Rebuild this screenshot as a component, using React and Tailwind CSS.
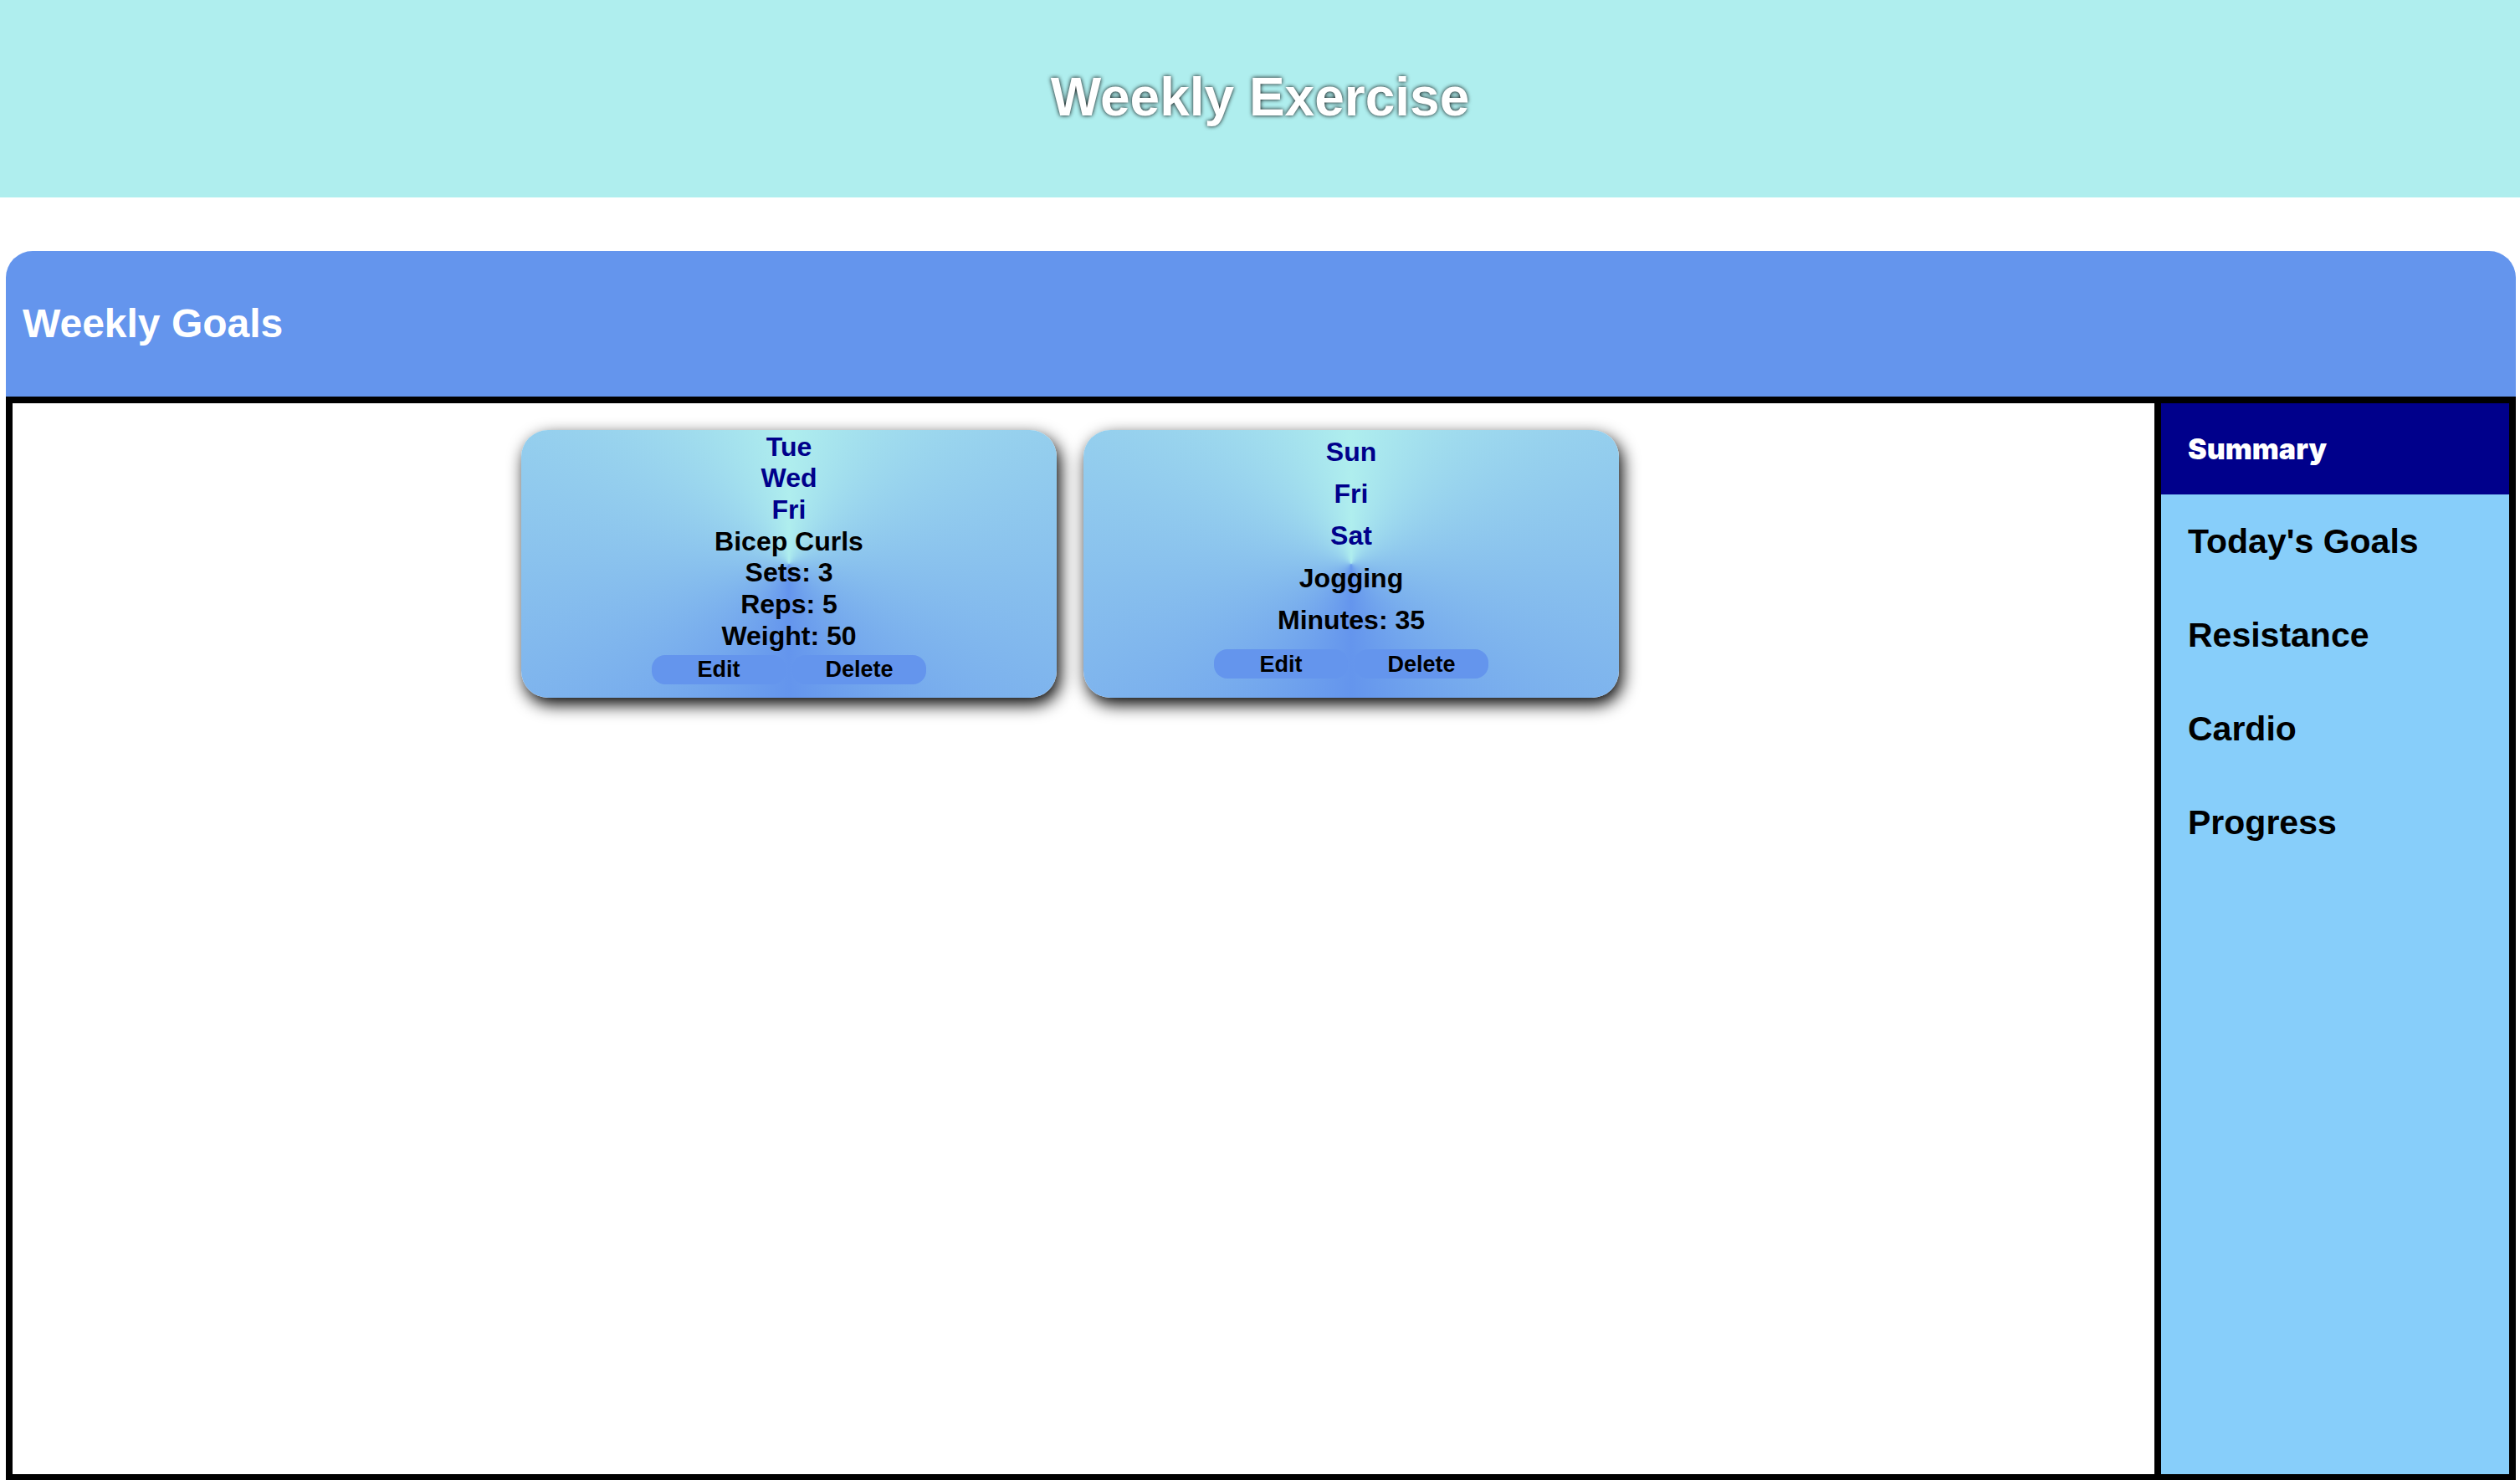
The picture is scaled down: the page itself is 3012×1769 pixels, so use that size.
const NAV_LINKS = ["Today's Goals", "Resistance", "Cardio", "Progress"];

const EXERCISES = [
  {
    days: ["Tue", "Wed", "Fri"],
    details: ["Bicep Curls", "Sets: 3", "Reps: 5", "Weight: 50"],
  },
  {
    days: ["Sun", "Fri", "Sat"],
    details: ["Jogging", "Minutes: 35"],
  },
];

function CardButton({ children }) {
  return (
    <button
      type="button"
      className="h-[35px] w-40 rounded-2xl bg-[#6495ed] text-[27px] leading-[30px] font-bold text-black"
    >
      {children}
    </button>
  );
}

function ExerciseCard({ days, details }) {
  return (
    <article className="mr-8 flex h-80 w-1/4 flex-col rounded-[32px] bg-[conic-gradient(#afeeee,#6495ed,#afeeee)] pt-px pb-[15px] text-center text-[32px] leading-[36px] font-bold shadow-[4px_8px_20px_black]">
      {days.map((day) => (
        <p key={day} className="flex flex-1 items-center justify-center text-[#00008b]">
          {day}
        </p>
      ))}
      {details.map((detail) => (
        <p key={detail} className="flex flex-1 items-center justify-center">
          {detail}
        </p>
      ))}
      <div className="flex flex-1 items-center justify-center gap-2 pt-[3px]">
        <CardButton>Edit</CardButton>
        <CardButton>Delete</CardButton>
      </div>
    </article>
  );
}

export default function App() {
  return (
    <div className="flex min-h-screen flex-col bg-white font-['Liberation_Sans',Arial,sans-serif] text-black">
      <header className="bg-[#afeeee] pt-20 pb-[84px] text-center">
        <h1 className="text-[64px] leading-[72px] font-bold text-white [text-shadow:0_0_5px_black]">
          Weekly Exercise
        </h1>
      </header>
      <div className="mt-16 mr-[5px] ml-[7px] flex flex-1 flex-col">
        <div className="rounded-t-[32px] bg-[#6495ed] px-5 py-[60px]">
          <h2 className="text-[48px] leading-[54px] font-bold text-white">Weekly Goals</h2>
        </div>
        <div className="flex flex-1 border-8 border-b-[7px] border-black">
          <main className="flex flex-1 items-start justify-center pt-8">
            {EXERCISES.map((exercise) => (
              <ExerciseCard key={exercise.details[0]} {...exercise} />
            ))}
          </main>
          <nav className="flex w-[424px] flex-col border-l-8 border-black bg-[#87cefa]">
            <a
              href="#summary"
              aria-current="page"
              className="bg-[#00008b] p-8 font-[Inter,sans-serif] text-[34px] leading-[45px] font-black text-white"
            >
              Summary
            </a>
            {NAV_LINKS.map((label) => (
              <a key={label} href="#" className="p-8 text-[41px] leading-[48px] font-bold">
                {label}
              </a>
            ))}
          </nav>
        </div>
      </div>
    </div>
  );
}
